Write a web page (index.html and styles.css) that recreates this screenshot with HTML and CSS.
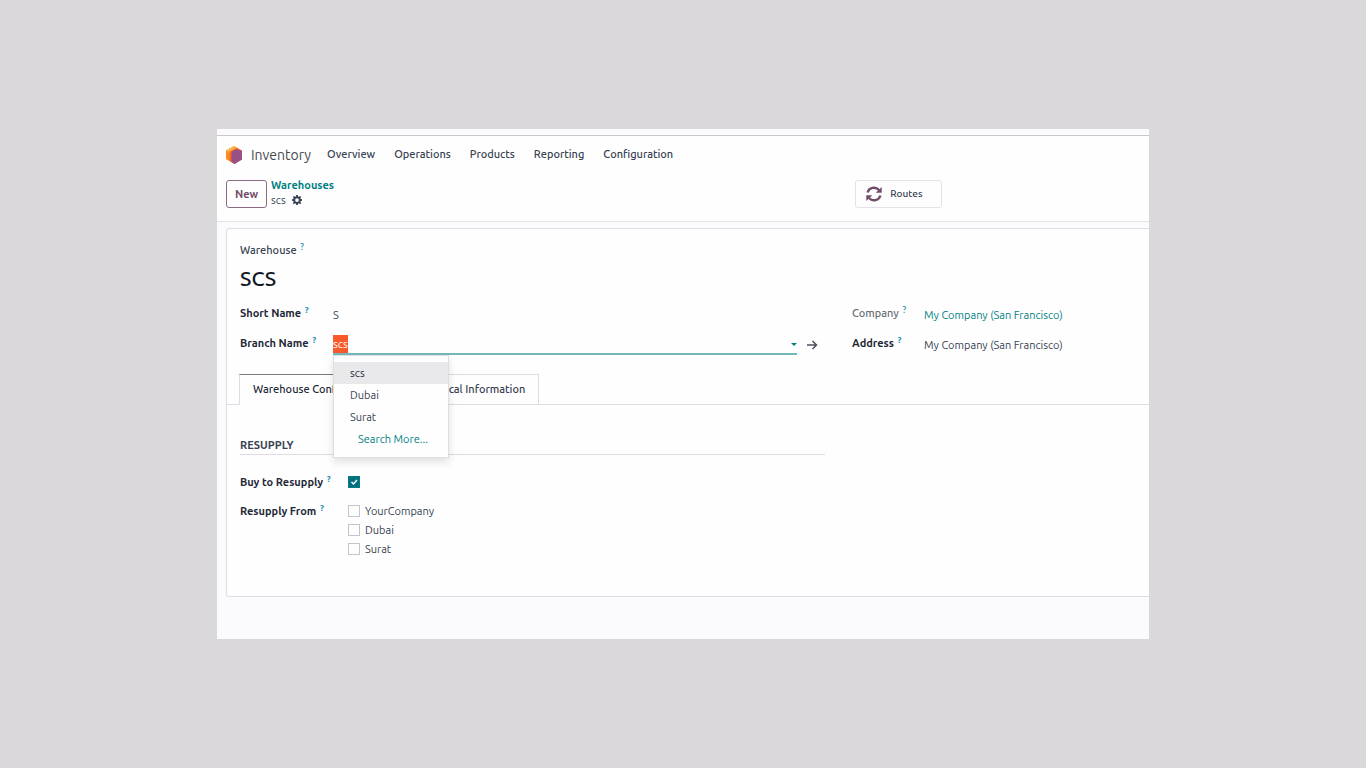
FILE: index.html
```
<!DOCTYPE html>
<html lang="en">
  <head>
    <meta charset="utf-8" />
    <meta name="viewport" content="width=device-width, initial-scale=1" />
    <title>Warehouses - scs</title>
    <link rel="stylesheet" href="styles.css">
  </head>
  <body>
    <div class="window">
      <div class="strip"></div>
      <header class="navbar">
        <svg class="logo" viewBox="0 0 16 18">
          <path d="M8 0 L0 4.500 V13 L5 16 L12 9 V2.300 Z" fill="#fc8c1e" />
          <path d="M8 0 L12 2.300 L3 7 L0 4.500 Z" fill="#fbb545" />
          <path d="M11 1.700 L3.500 5.500 V15 L8.500 18 L16 13.500 V4.500 Z" fill="#f4672b" />
          <path d="M12 3.500 L9.500 3.500 L5.500 6 V16 L8.500 18 L16 13.500 V5 Z" fill="#985184" />
        </svg>
        <a class="app-name" href="#">Inventory</a>
        <nav class="menu">
          <a href="#">Overview</a>
          <a href="#">Operations</a>
          <a href="#">Products</a>
          <a href="#">Reporting</a>
          <a href="#">Configuration</a>
        </nav>
      </header>

      <div class="control-panel">
        <div class="control-left">
          <button class="btn-new" type="button">New</button>
          <div class="breadcrumb">
            <a href="#">Warehouses</a>
            <div class="current">
              <span>scs</span>
              <svg class="gear" viewBox="0 0 16 16">
                <path fill-rule="evenodd" fill="#374151" d="M6.700 0h2.600l.4 2.200 1.400.6L13 1.500 14.600 3.100l-1.300 1.800.6 1.500 2.100.3v2.600l-2.100.4-.6 1.400 1.300 1.900-1.600 1.600-1.900-1.300-1.400.6L9.300 16H6.700l-.4-2.100-1.400-.6L3 14.600 1.400 13l1.300-1.900-.6-1.400L0 9.300V6.700l2.100-.3.6-1.500L1.400 3.100 3 1.500l1.900 1.300 1.400-.6zM8 5a3 3 0 1 0 0 6 3 3 0 0 0 0-6z" />
              </svg>
            </div>
          </div>
        </div>
        <div>
          <button class="btn-stat" type="button">
            <svg class="refresh" viewBox="0 0 16 16">
              <g fill="none" stroke="#714b67" stroke-width="2.300">
                <path d="M1.600 6.500 A6.500 6 0 0 1 13 4" />
                <path d="M14.400 9.500 A6.500 6 0 0 1 3 12" />
              </g>
              <path d="M15.700 1v5.800H9.700z M.3 15V9.200H6.300z" fill="#714b67" />
            </svg>
            <span>Routes</span>
          </button>
        </div>
      </div>

      <main class="content">
        <form class="sheet">
          <div class="title">
            <label for="name">Warehouse <sup>?</sup></label>
            <input id="name" type="text" value="SCS" />
          </div>

          <div class="columns">
            <div class="group">
              <div class="field">
                <label for="code">Short Name <sup>?</sup></label>
                <input id="code" type="text" value="S" />
              </div>
              <div class="field">
                <label for="branch">Branch Name <sup>?</sup></label>
                <div class="many2one">
                  <div class="autocomplete">
                    <input id="branch" type="text" value="scs" autocomplete="off" spellcheck="false" />
                    <span class="caret"></span>
                    <ul class="dropdown">
                      <li class="active">scs</li>
                      <li>Dubai</li>
                      <li>Surat</li>
                      <li class="more"><a href="#">Search More...</a></li>
                    </ul>
                  </div>
                  <svg class="arrow" viewBox="0 0 12 12">
                    <path d="M1 6h9M6.500 2l4 4-4 4" fill="none" stroke="#4b5058" stroke-width="1.500" />
                  </svg>
                </div>
              </div>
            </div>
            <div class="group side">
              <div class="field">
                <span class="label readonly">Company <sup>?</sup></span>
                <a href="#">My Company (San Francisco)</a>
              </div>
              <div class="field">
                <label for="address">Address <sup>?</sup></label>
                <input id="address" type="text" value="My Company (San Francisco)" />
              </div>
            </div>
          </div>

          <div class="tabs">
            <button class="tab active" type="button">Warehouse Configuration</button>
            <button class="tab" type="button">Technical Information</button>
          </div>

          <div class="columns page">
            <div class="group">
              <h2>RESUPPLY</h2>
              <div class="option">
                <label for="buy">Buy to Resupply <sup>?</sup></label>
                <input id="buy" type="checkbox" checked />
              </div>
              <div class="option">
                <span class="label">Resupply From <sup>?</sup></span>
                <div class="checks">
                  <label><input type="checkbox" /> YourCompany</label>
                  <label><input type="checkbox" /> Dubai</label>
                  <label><input type="checkbox" /> Surat</label>
                </div>
              </div>
            </div>
          </div>
        </form>
      </main>
    </div>
    <script>
      const branch = document.querySelector("#branch");
      branch.focus();
      branch.select();
    </script>
  </body>
</html>
```
FILE: styles.css
```
* {
  box-sizing: border-box;
}

body {
  margin: 0;
  padding: 129px 217px;
  background: #dad8db;
  color: #374151;
  font-family: Ubuntu, "Noto Sans", sans-serif;
  font-size: 11px;
  line-height: 18px;
}

a {
  color: #017e84;
  text-decoration: none;
}

button,
input {
  font: inherit;
  color: inherit;
}

input[type="text"] {
  width: 100%;
  height: 18px;
  padding: 0;
  border: 0;
  outline: 0;
  background: transparent;
}

.window {
  overflow: hidden;
  background: #fefefe;
}

.strip {
  height: 7px;
  background: #fbfafc;
  border-bottom: 1px solid #c9c7cb;
}

.navbar {
  display: flex;
  align-items: center;
  height: 37px;
  padding-left: 9px;
}

.logo {
  width: 16px;
  height: 18px;
  margin-right: 9px;
}

.app-name {
  margin-right: 16px;
  font-size: 14px;
  color: #45484f;
}

.menu {
  display: flex;
  gap: 19px;
  padding-bottom: 1px;
}

.menu a {
  color: #374151;
  font-weight: 500;
}

.control-panel {
  display: grid;
  grid-template-columns: 15fr 7fr;
  align-items: center;
  height: 49px;
  padding: 0 0 7px 9px;
  border-bottom: 1px solid #e4e2e7;
}

.control-left {
  display: flex;
  align-items: center;
  gap: 4px;
}

.btn-new {
  width: 41px;
  height: 28px;
  padding: 0;
  border: 1px solid #8c6b83;
  border-radius: 3px;
  background: #fefefe;
  color: #714b67;
  font-weight: 600;
}

.breadcrumb {
  padding-bottom: 2px;
  line-height: 15px;
}

.breadcrumb a {
  font-weight: 600;
}

.current {
  display: flex;
  align-items: center;
  gap: 6px;
}

.gear {
  width: 10px;
  height: 10px;
}

.btn-stat {
  display: flex;
  align-items: center;
  gap: 8px;
  width: 87px;
  height: 28px;
  padding: 0 10px;
  border: 1px solid #e4e2e7;
  border-radius: 3px;
  background: #fefefe;
  font-size: 10px;
  font-weight: 500;
}

.refresh {
  width: 16px;
  height: 16px;
}

.content {
  padding: 6px 0 42px 9px;
  background: #fbfafc;
}

.sheet {
  padding: 12px 0 27px;
  border: 1px solid #e0dee3;
  border-right: 0;
  border-radius: 3px 0 0 3px;
  background: #fefefe;
}

sup {
  position: relative;
  top: -4px;
  margin-left: 1px;
  font-size: 9px;
  line-height: 0;
  vertical-align: baseline;
  color: #1a8fb0;
}

.title {
  display: flex;
  flex-direction: column;
  padding-left: 13px;
  font-weight: 500;
}

.title input[type="text"] {
  height: 30px;
  margin: 4px 0 5px;
  font-size: 21px;
  color: #111827;
}

.columns {
  display: grid;
  grid-template-columns: 65fr 33fr;
  column-gap: 27px;
  padding-left: 13px;
}

.field {
  display: grid;
  grid-template-columns: 93px 1fr;
  align-items: center;
  height: 30px;
}

.side .field {
  grid-template-columns: 72px 1fr;
}

.field > :last-child {
  margin-top: 4px;
}

.field > label,
.option > label,
.label {
  color: #1f2937;
  font-weight: 600;
}

.label.readonly {
  color: #6b6f76;
  font-weight: 500;
}

.many2one {
  display: flex;
  align-items: center;
  gap: 9px;
}

.autocomplete {
  position: relative;
  display: flex;
  align-items: center;
  flex: 1;
  border-bottom: 2px solid #74b7ba;
}

#branch::selection {
  background: #f9592b;
  color: #fff;
}

.caret {
  border: 3px solid transparent;
  border-top-color: #017e84;
  border-bottom: 0;
}

.arrow {
  width: 12px;
  height: 12px;
  margin-right: 7px;
}

.dropdown {
  position: absolute;
  top: 100%;
  left: 0;
  z-index: 1;
  width: 116px;
  margin: 2px 0 0;
  padding: 6px 0 7px;
  border: 1px solid #dfdde1;
  background: #fefefe;
  box-shadow: 0 4px 8px rgba(0, 0, 0, 0.12);
  list-style: none;
  line-height: 22px;
}

.dropdown li {
  padding-left: 16px;
}

.dropdown .active {
  background: #e9e9eb;
  color: #1f2937;
}

.dropdown .more {
  padding-left: 24px;
}

.tabs {
  display: flex;
  margin-top: 16px;
  padding-left: 12px;
  border-bottom: 1px solid #dedce2;
}

.tab {
  height: 31px;
  margin-bottom: -1px;
  padding: 0 13px 2px;
  border: 1px solid #dedce2;
  border-left: 0;
  background: #fefefe;
  font-weight: 500;
}

.tab.active {
  padding-right: 20px;
  border-top-color: #77797e;
  border-left: 1px solid #dedce2;
  border-bottom-color: #fefefe;
  color: #1f2937;
}

.page {
  padding-top: 31px;
}

h2 {
  margin: 0 0 18px;
  border-bottom: 1px solid #dedce2;
  font-size: 11px;
  font-weight: 600;
  color: #374151;
}

.option {
  display: grid;
  grid-template-columns: 108px 1fr;
  align-items: start;
  margin-bottom: 11px;
}

.option input {
  appearance: none;
  width: 12px;
  height: 12px;
  margin: 3px 0 0;
  border: 1px solid #c5c3cb;
  background: #fefefe;
}

.option input:checked {
  border-color: #017e84;
  background: #00707f url("data:image/svg+xml,%3Csvg xmlns='http://www.w3.org/2000/svg' viewBox='0 0 10 10'%3E%3Cpath d='M2.500 5l2 2 3.500-4' fill='none' stroke='white' stroke-width='1.500'/%3E%3C/svg%3E");
}

.checks {
  display: flex;
  flex-direction: column;
  gap: 1px;
}

.checks label {
  display: flex;
  gap: 5px;
}
```
